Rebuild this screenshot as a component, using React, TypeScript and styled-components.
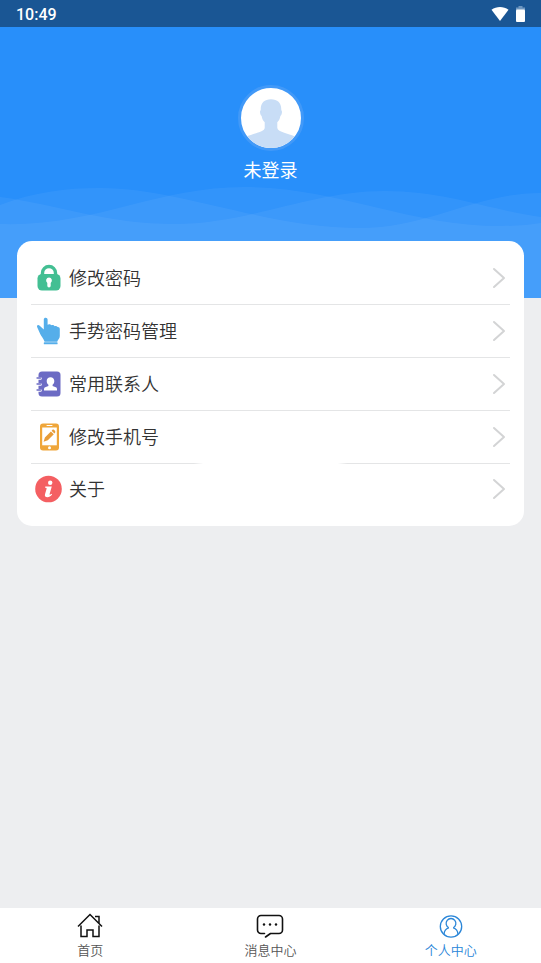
import React from 'react';
import styled, { createGlobalStyle, css } from 'styled-components';

const GlobalStyle = createGlobalStyle`
  *, *::before, *::after { box-sizing: border-box; }
  body {
    margin: 0;
    background: #edeef0;
    font-family: Roboto, "Noto Sans CJK SC", sans-serif;
  }
`;

const Page = styled.div`
  display: flex;
  flex-direction: column;
  min-height: 100vh;
  background: #edeef0;
`;

const StatusBar = styled.div`
  display: flex;
  align-items: center;
  justify-content: space-between;
  height: 27px;
  padding: 2px 16px 0;
  background: #1a5694;
  color: #fff;
`;

const Clock = styled.time`
  font-size: 16px;
  line-height: 25px;
  font-weight: 500;
`;

const StatusIcons = styled.div`
  display: flex;
  align-items: center;
  gap: 7px;
  padding-bottom: 2px;
`;

const Hero = styled.header`
  position: relative;
  display: flex;
  flex-direction: column;
  align-items: center;
  height: 271px;
  padding-top: 58px;
  background: #288ffa;
`;

const Waves = styled.svg`
  position: absolute;
  left: 0;
  bottom: 0;
  width: 100%;
  height: 118px;
`;

const Avatar = styled.div`
  position: relative;
  width: 66px;
  height: 66px;
  border: 3px solid #4199f8;
  border-radius: 50%;
  overflow: hidden;
  background: #fff;
`;

const UserName = styled.h1`
  position: relative;
  margin: 7px 0 0;
  color: #fff;
  font-size: 18px;
  line-height: 26px;
  font-weight: 400;
`;

const Main = styled.main`
  position: relative;
  flex: 1;
  margin-top: -57px;
  padding: 0 17px 24px;
`;

const Menu = styled.ul`
  margin: 0;
  padding: 11px 14px 12px;
  list-style: none;
  background: #fff;
  border-radius: 15px;
`;

const MenuButton = styled.button`
  display: flex;
  align-items: center;
  gap: 6px;
  width: 100%;
  height: 52px;
  padding: 0 4px;
  border: 0;
  background: none;
  color: #333;
  font: inherit;
  font-size: 18px;
  font-weight: 350;
  line-height: 26px;
  text-align: left;
  cursor: pointer;
`;

const MenuItem = styled.li<{ $fadedLine?: boolean }>`
  &:not(:last-child)::after {
    content: "";
    display: block;
    height: 1px;
    background: #e4e5e6;
    ${({ $fadedLine }) =>
      $fadedLine &&
      css`
        background: linear-gradient(
          to right,
          #e4e5e6 34%,
          #fff 36%,
          #fff 64%,
          #e4e5e6 66%
        );
      `}
  }

  &:last-child ${MenuButton} {
    height: 50px;
  }
`;

const MenuLabel = styled.span`
  flex: 1;
  padding-top: 2px;
`;

const TabBar = styled.nav`
  position: sticky;
  bottom: 0;
  display: grid;
  grid-template-columns: repeat(3, 1fr);
  height: 55px;
  background: #fff;
`;

const Tab = styled.a<{ $active?: boolean }>`
  display: flex;
  flex-direction: column;
  align-items: center;
  padding-top: 4px;
  color: ${({ $active }) => ($active ? '#2a86d8' : '#555')};
  font-size: 13px;
  font-weight: 350;
  line-height: 22px;
  text-decoration: none;

  svg {
    color: ${({ $active }) => ($active ? '#2a86d8' : '#111')};
  }
`;

const LockIcon = () => (
  <svg width="28" height="28" viewBox="0 0 28 28" aria-hidden="true">
    <path d="M7.500 12V9a6.500 6.500 0 0 1 13 0v3" fill="none" stroke="#43bf93" strokeWidth="3.400" />
    <rect x="2.500" y="10" width="23" height="16.500" rx="4.500" fill="#43bf93" />
    <path d="M14 13.500a3 3 0 0 1 1.700 5.400v2.900a1.700 1.700 0 0 1-3.400 0v-2.900A3 3 0 0 1 14 13.500z" fill="#fff" />
  </svg>
);

const HandIcon = () => (
  <svg width="28" height="28" viewBox="0 0 28 28" aria-hidden="true">
    <path
      d="M8.800 2.400C8.800 1.300 9.600.7 10.700.7s1.900.8 1.900 1.900v5.200c1-.9 3-.7 3.600.5 1.100-.7 2.900-.3 3.400.9 1.100-.4 2.400-.1 3 .8 1.300-.2 2.200.8 2.200 2.100v6.800c0 2.600-1.900 3.500-2.600 5.800H9.600C8.500 21.300 6.300 19.500 5.200 17L2.200 10.300c-.9-2.200 1.300-3 2.500-1.500l4.100 3.700z"
      fill="#55aeea"
    />
    <rect x="8.800" y="25.300" width="13.800" height="2" rx=".6" fill="#55aeea" />
  </svg>
);

const ContactsIcon = () => (
  <svg width="28" height="28" viewBox="0 0 28 28" aria-hidden="true">
    <rect x="3.500" y="1.500" width="22" height="25" rx="3.500" fill="#6c6bc4" />
    <g strokeLinecap="round">
      <path d="M3 8.500h2.500M3 14.500h2.500M3 20.500h2.500" stroke="#fff" strokeWidth="2.600" />
      <path d="M2 8h3.500M2 14h3.500M2 20h3.500" stroke="#6c6bc4" strokeWidth="1.300" />
    </g>
    <path
      d="M15.500 7.200c2.200 0 3.800 1.600 3.800 3.900 0 1.600-.6 2.900-1.700 3.700v1.100l3.200 1.400c.9.400 1.200 1.200 1.200 2.100v1.200H9v-1.200c0-.9.400-1.700 1.200-2.100l3.200-1.400v-1.100c-1.100-.8-1.700-2.100-1.700-3.700 0-2.300 1.600-3.900 3.800-3.900z"
      fill="#fff"
    />
  </svg>
);

const PhoneEditIcon = () => (
  <svg width="28" height="28" viewBox="0 0 28 28" aria-hidden="true">
    <rect x="5" y=".5" width="19" height="27" rx="3" fill="#efa63a" />
    <rect x="7.200" y="4.500" width="14.600" height="17.800" fill="#fff" />
    <path d="M12 2.500h5" stroke="#fff" strokeWidth="1" strokeLinecap="round" />
    <circle cx="14.500" cy="24.800" r="1.500" fill="#fff" />
    <path d="M8.600 18.700l1.300-4.300 6-6 2.900 2.900-6 6zM16.600 7.700l.9-.9c1-.9 3.500 1.600 2.700 2.600l-.8 1z" fill="#e79c38" />
  </svg>
);

const InfoIcon = () => (
  <svg width="28" height="28" viewBox="0 0 28 28" aria-hidden="true">
    <circle cx="13.500" cy="14" r="13.300" fill="#f45f62" />
    <circle cx="15.200" cy="7.800" r="2.200" fill="#fff" />
    <path
      d="M10.300 11.500h6.500l-2.200 7.600c-.2.900.6.700 1.900-.3l.6.700c-1.500 1.900-3 2.700-4.600 2.700-2.200 0-3-1.100-2.500-2.900l1.600-5.600c.1-.7-.1-.9-1.600-.9z"
      fill="#fff"
    />
  </svg>
);

const Chevron = () => (
  <svg width="14" height="22" viewBox="0 0 14 22" fill="none" aria-hidden="true">
    <path d="M2 2l10 9L2 20" stroke="#d3d4d5" strokeWidth="2" strokeLinecap="round" strokeLinejoin="round" />
  </svg>
);

const HomeIcon = () => (
  <svg width="28" height="28" viewBox="0 0 28 28" fill="none" stroke="currentColor" strokeWidth="1.500" aria-hidden="true">
    <path d="M2 14.500L14 2.500l12 12M19 4.500h4v7M5 13.500v11h6v-6.500h6v6.500h6v-11" />
  </svg>
);

const MessageIcon = () => (
  <svg width="28" height="28" viewBox="0 0 28 28" fill="none" aria-hidden="true">
    <path
      d="M8.500 21.500H5A3.500 3.500 0 0 1 1.500 18V7A3.500 3.500 0 0 1 5 3.500h18A3.500 3.500 0 0 1 26.500 7v11a3.500 3.500 0 0 1-3.500 3.500h-8.500L9.500 25"
      stroke="currentColor"
      strokeWidth="1.600"
      strokeLinecap="round"
      strokeLinejoin="round"
    />
    <g fill="currentColor">
      <circle cx="8" cy="12.500" r="1.200" />
      <circle cx="14" cy="12.500" r="1.200" />
      <circle cx="20" cy="12.500" r="1.200" />
    </g>
  </svg>
);

const ProfileIcon = () => (
  <svg width="28" height="28" viewBox="0 0 28 28" fill="none" stroke="currentColor" strokeWidth="1.300" aria-hidden="true">
    <circle cx="14" cy="14.500" r="10.700" />
    <path d="M11.800 15.800a4.900 4.900 0 1 1 4.400 0M11.800 15.800c-3 .9-4.600 3-4.700 6.200M16.200 15.800c3 .9 4.600 3 4.700 6.200" />
  </svg>
);

const menu = [
  { label: '修改密码', icon: <LockIcon /> },
  { label: '手势密码管理', icon: <HandIcon /> },
  { label: '常用联系人', icon: <ContactsIcon /> },
  { label: '修改手机号', icon: <PhoneEditIcon />, fadedLine: true },
  { label: '关于', icon: <InfoIcon /> },
];

const tabs = [
  { label: '首页', href: '#home', icon: <HomeIcon /> },
  { label: '消息中心', href: '#messages', icon: <MessageIcon /> },
  { label: '个人中心', href: '#profile', icon: <ProfileIcon />, active: true },
];

export default function App() {
  return (
    <Page>
      <GlobalStyle />
      <StatusBar>
        <Clock>10:49</Clock>
        <StatusIcons>
          <svg width="18" height="16" viewBox="0 0 18 16" aria-hidden="true">
            <path d="M.5 3.800C5.500 0 12.500 0 17.500 3.800L9 15z" fill="#fff" />
          </svg>
          <svg width="9" height="16" viewBox="0 0 9 16" aria-hidden="true">
            <path d="M2.500 0h4v1.500H9V4H0V1.500h2.500z" fill="#6d96c0" />
            <rect y="3.500" width="9" height="12.500" rx="1" fill="#fff" />
          </svg>
        </StatusIcons>
      </StatusBar>
      <Hero>
        <Waves viewBox="0 180 541 118" preserveAspectRatio="none" aria-hidden="true">
          <g fill="#fff" fillOpacity=".05">
            <path d="M0 205C35 192 65 188 100 188C180 188 265 228 360 228C430 228 475 193 541 193V298H0z" />
            <path d="M0 197C60 205 105 224 175 224C250 224 310 191 385 191C445 191 490 210 541 217V298H0z" />
            <path d="M0 224C95 227 155 187 245 187C335 187 410 226 500 226C515 226 530 225 541 223V298H0z" />
          </g>
        </Waves>
        <Avatar>
          <svg width="60" height="60" viewBox="0 0 62 62" aria-hidden="true">
            <path
              d="M31 11.500c7 0 11 4 10.600 11.500 1.200.3 1 4.500-.9 6-.5 3-1.500 5-3.200 6.500v5.500c0 4.500 11 5.500 19 9.500L50 62H12L5 50.500c8-4 19.500-5 19.500-9.500v-5.500c-1.700-1.500-2.700-3.500-3.200-6.500-1.900-1.500-2.100-5.700-.9-6C20 15.500 24 11.500 31 11.500z"
              fill="#c8ddf6"
            />
          </svg>
        </Avatar>
        <UserName>未登录</UserName>
      </Hero>
      <Main>
        <Menu>
          {menu.map((item) => (
            <MenuItem key={item.label} $fadedLine={item.fadedLine}>
              <MenuButton type="button">
                {item.icon}
                <MenuLabel>{item.label}</MenuLabel>
                <Chevron />
              </MenuButton>
            </MenuItem>
          ))}
        </Menu>
      </Main>
      <TabBar>
        {tabs.map((tab) => (
          <Tab
            key={tab.label}
            href={tab.href}
            $active={tab.active}
            aria-current={tab.active ? 'page' : undefined}
          >
            {tab.icon}
            {tab.label}
          </Tab>
        ))}
      </TabBar>
    </Page>
  );
}
